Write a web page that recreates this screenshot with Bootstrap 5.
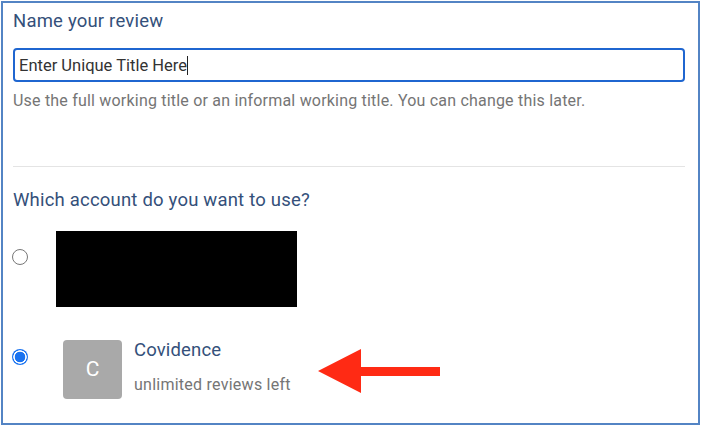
<!DOCTYPE html>
<html lang="en">
<head>
<meta charset="utf-8">
<title>Name your review</title>
<link href="https://cdn.jsdelivr.net/npm/bootstrap@5.3.0/dist/css/bootstrap.min.css" rel="stylesheet">
<style>
html,body{height:427px;overflow:hidden;background:#fff;font-family:Roboto,"Liberation Sans",sans-serif}
.review-frame{position:relative;width:699px;height:424px;margin:1px 0 0 1px;border:2px solid #5384c4;padding:6px 13px 0 10px}
.review-heading{font-size:18.5px;line-height:24px;color:#34507a;letter-spacing:.2px;font-weight:400;margin:0}
.review-input.form-control{height:34px;margin-top:15px;padding:0 4px;font-size:16.5px;color:#333;border:2px solid #1f66d0;border-radius:4px;box-shadow:none;font-family:inherit}
.review-help{font-size:16px;line-height:20px;color:#757575;margin-top:9px;letter-spacing:.2px}
.review-rule{margin:55px 0 0;border-color:#e4e4e4;opacity:1}
.review-question{margin-top:21px}
.account-radio.form-check-input{width:16px;height:16px;margin:0 0 0 -1px;flex:none;background-color:#fff;border:1.5px solid #777}
.account-radio.form-check-input:checked{border:none;box-shadow:none;background:radial-gradient(circle,#1a73f0 0 5px,#fff 5.6px 6.4px,#1a73f0 7px)}
.redacted-row{margin-top:19px;height:76px}
.redacted-block{width:241px;height:76px;background:#000;margin-left:28px}
.redacted-row .account-radio{margin-top:18px}
.account-row{margin-top:33px}
.account-row .account-radio{margin-top:9px}
.account-tile{width:59px;height:59px;background:#a9a9a9;border-radius:4px;color:#fff;font-size:21px;margin-left:35px;flex:none}
.account-name{font-size:18.5px;line-height:24px;color:#34507a;letter-spacing:.15px}
.account-left{font-size:16px;line-height:20px;color:#757575;margin-top:13px;letter-spacing:.25px}
.account-text{margin-left:12px;margin-top:-2px}
.red-arrow{position:absolute;left:312px;top:345px;width:126px;height:46px}
.title-caret{position:absolute;left:184px;top:53px;width:1px;height:19px;background:#222}
</style>
</head>
<body>
<div class="review-frame">
  <h2 class="review-heading">Name your review</h2>
  <input class="form-control review-input" type="text" value="Enter Unique Title Here" aria-label="Review title">
  <span class="title-caret"></span>
  <div class="review-help">Use the full working title or an informal working title. You can change this later.</div>
  <hr class="review-rule">
  <h2 class="review-heading review-question">Which account do you want to use?</h2>
  <div class="d-flex align-items-start redacted-row">
    <input class="form-check-input account-radio" type="radio" name="account" aria-label="Redacted account">
    <div class="redacted-block"></div>
  </div>
  <div class="d-flex align-items-start account-row">
    <input class="form-check-input account-radio" type="radio" name="account" checked aria-label="Covidence">
    <div class="account-tile d-flex align-items-center justify-content-center">C</div>
    <div class="account-text">
      <div class="account-name">Covidence</div>
      <div class="account-left">unlimited reviews left</div>
    </div>
  </div>
  <svg class="red-arrow" viewBox="0 0 126 46" aria-hidden="true"><polygon points="3,23 46,1 46,19 125,19 125,28 46,28 46,45" fill="#ff2a14"/></svg>
</div>
</body>
</html>
